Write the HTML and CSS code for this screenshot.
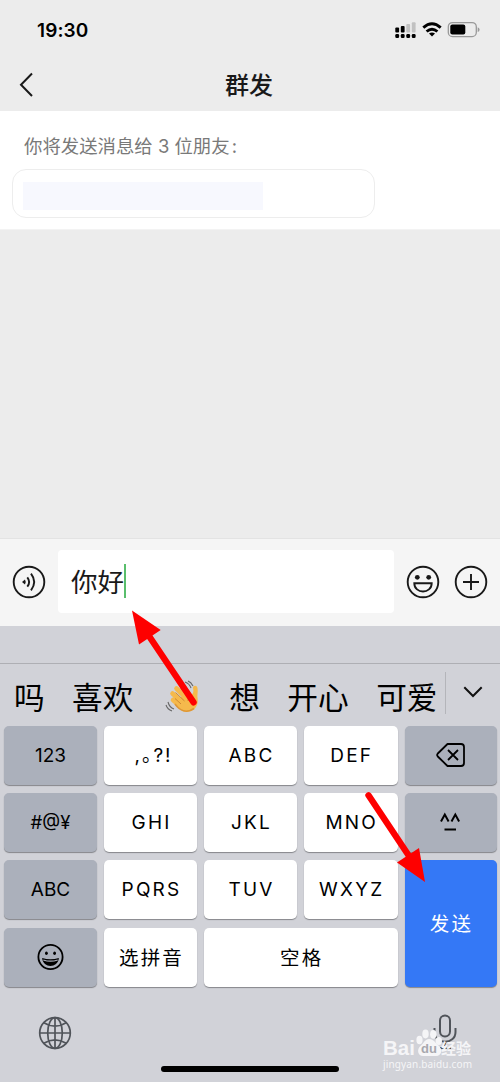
FILE: index.html
```html
<!DOCTYPE html>
<html lang="zh-CN">
<head>
<meta charset="utf-8">
<title>群发</title>
<link rel="stylesheet" href="styles.css">
</head>
<body>
<main class="phone">
  <header class="top">
    <div class="status">
      <span class="time">19:30</span>
      <svg class="indicators" width="88" height="18" viewBox="0 0 88 18">
        <g fill="#000">
          <rect x="1.3" y="7.5" width="3.8" height="5" rx="1"/><rect x="6.8" y="6" width="3.8" height="6.5" rx="1"/>
          <rect x="1.3" y="14" width="3.8" height="4" rx="1.2"/><rect x="6.8" y="14" width="3.8" height="4" rx="1.2"/><rect x="12.3" y="14" width="3.8" height="4" rx="1.2"/><rect x="17.8" y="14" width="3.8" height="4" rx="1.2"/>
        </g>
        <g fill="#c1c1c1"><rect x="12.3" y="4" width="3.8" height="8.5" rx="1"/><rect x="17.8" y="2.2" width="3.8" height="10.3" rx="1"/></g>
        <g fill="none" stroke="#000" stroke-width="2.9"><path d="M29.3 7.7q8.700-7.700 17.400 0"/><path d="M32.600 11.500q5.400-4.700 10.800 0"/></g>
        <path d="M35 13.600q3-2.200 6 0l-3 3z" fill="#000"/>
        <rect x="54.300" y="2.600" width="28" height="14" rx="4.200" fill="none" stroke="#999" stroke-width="1.300"/>
        <rect x="56.300" y="4.600" width="15" height="10" rx="2" fill="#000"/>
        <path d="M83.700 7.300q1.900.7 1.900 2.400t-1.900 2.400z" fill="#999"/>
      </svg>
    </div>
    <nav class="nav">
      <svg class="back" width="16" height="26" viewBox="0 0 16 26"><path d="M14 1.500 3 12.700 14 24" fill="none" stroke="#191919" stroke-width="2"/></svg>
      <h1 class="title">群发</h1>
    </nav>
  </header>

  <section class="recipients">
    <p class="hint">你将发送消息给 3 位朋友<span class="colon">:</span></p>
    <div class="names"><div class="mask"></div></div>
  </section>
  <section class="chat"></section>

  <section class="composer">
    <svg class="voice" width="34" height="34" viewBox="0 0 34 34" fill="none" stroke="#191919" stroke-width="1.9">
      <circle cx="17" cy="17" r="15.3"/>
      <path d="M10 17l3-2.500q1.500 2.500 0 5z" fill="#191919" stroke="none"/>
      <path d="M15.300 12.300q3.700 4.700 0 9.400M19 8.700q6.400 8.300 0 16.600"/>
    </svg>
    <div class="input"><span>你好</span><i class="caret"></i></div>
    <svg class="smile" width="34" height="34" viewBox="0 0 34 34" fill="none" stroke="#191919" stroke-width="1.9">
      <circle cx="17" cy="17" r="15.3"/>
      <circle cx="11.300" cy="12.300" r="2.400" fill="#191919" stroke="none"/><circle cx="22.700" cy="12.300" r="2.400" fill="#191919" stroke="none"/>
      <path d="M8.300 18.200h17.400c0 11-17.400 11-17.400 0z"/>
    </svg>
    <svg class="plus" width="34" height="34" viewBox="0 0 34 34" fill="none" stroke="#191919" stroke-width="1.9">
      <circle cx="17" cy="17" r="15.3"/><path d="M17 9v16M9 17h16"/>
    </svg>
  </section>

  <section class="keyboard">
    <div class="strip"></div>
    <div class="candidates">
      <span>吗</span><span>喜欢</span>
      <svg class="wave" width="41" height="38" viewBox="0 0 41 38">
        <g fill="none" stroke="#f5b94c" stroke-linecap="round" stroke-width="4.600">
          <path d="M12 21l8 7M11.500 14.500l11 10M15.500 9.500l11 11M22 7l8 11"/>
        </g>
        <path d="M13 22l7-4 9-2c3 0 4-3 3-7 0-3 4-3 4.500 0 .8 4-.7 7 .2 11 1 9-6 13-11 13-6 0-9-5-12.700-11z" fill="#f5b94c"/>
        <path d="M14 19.500l6 5.500M14.500 13.500l9 8.500M19.500 9.500l8 8.500M31 16c-3 1-4 3-4 6" fill="none" stroke="#cd8733" stroke-width="1"/>
        <path d="M14 25c5 7 12 9.500 19 4.500" fill="none" stroke="#dd9637" stroke-width="1.600"/>
        <path d="M24 3c3 1 5 3 6 6M27 2c3 1 4 3 5 5M7 23c1 4 3 6 6 7M5 26c1 3 3 5 6 6" fill="none" stroke="#676767" stroke-width="1.100"/>
      </svg>
      <span>想</span><span>开心</span><span>可爱</span>
      <div class="more"><svg width="22" height="14" viewBox="0 0 22 14"><path d="M2.300 2.300 11 11l8.700-8.700" fill="none" stroke="#111" stroke-width="2"/></svg></div>
    </div>
    <div class="keys">
      <div class="key dark">123</div><div class="key marks">,。?!</div><div class="key">ABC</div><div class="key">DEF</div>
      <div class="key dark"><svg width="30" height="26" viewBox="0 0 30 26" fill="none" stroke="#000" stroke-width="1.800"><path d="M11.500 2H25q3 0 3 3v16q0 3-3 3H11.500L1.800 14.500q-1.300-1.500 0-3z" stroke-linejoin="round"/><path d="M12 8l10 10m0-10l-10 10"/></svg></div>
      <div class="key dark symbols">#@¥</div><div class="key">GHI</div><div class="key">JKL</div><div class="key">MNO</div>
      <div class="key dark"><svg width="24" height="20" viewBox="0 0 24 20" fill="none" stroke="#000" stroke-width="2"><path d="M2 9.500 5.800 2.500l3.800 7M12.500 9.500l3.800-7 3.800 7M5.500 17.500h11.500"/></svg></div>
      <div class="key dark">ABC</div><div class="key">PQRS</div><div class="key">TUV</div><div class="key">WXYZ</div>
      <div class="key send">发送</div>
      <div class="key dark"><svg width="28" height="28" viewBox="0 0 28 28"><circle cx="13.500" cy="14" r="12.100" fill="none" stroke="#000" stroke-width="1.800"/><ellipse cx="9.400" cy="10.200" rx="1.400" ry="1.800"/><ellipse cx="17.600" cy="10.200" rx="1.400" ry="1.800"/><path d="M5.100 15q8.400 2.600 16.800 0c-1 10.500-15.800 10.500-16.800 0z"/><path d="M6.300 17q7.200 2.400 14.400 0" fill="none" stroke="#abb0bb" stroke-width="1.200"/></svg></div>
      <div class="key han">选拼音</div><div class="key han space">空格</div>
    </div>
    <footer class="bottom">
      <svg class="globe" width="34" height="34" viewBox="0 0 34 34" fill="none" stroke="#50545a" stroke-width="1.700"><circle cx="17" cy="17" r="15.3"/><ellipse cx="17" cy="17" rx="7.300" ry="15.300"/><path d="M17 1.700v30.600M1.700 17h30.600M5.800 6.700q11.200 7 22.400 0M5.800 27.300q11.200-7 22.400 0"/></svg>
      <svg class="mic" width="24" height="36" viewBox="0 0 24 36" fill="none" stroke="#50545a" stroke-width="2"><rect x="7" y="1.500" width="10" height="21" rx="5"/><path d="M1.500 14v4c0 13 21 13 21 0v-4M12 28v6M6 34h12"/></svg>
    </footer>
    <div class="home"></div>
  </section>

  <div class="watermark">
    <div class="brand"><span class="bai">Bai</span><span class="paw"><svg width="28" height="28" viewBox="0 0 28 28" fill="#f5f5f7"><ellipse cx="4.500" cy="11" rx="3.100" ry="4.200"/><ellipse cx="10.500" cy="5" rx="3.200" ry="4.400"/><ellipse cx="18.300" cy="5.300" rx="3.200" ry="4.400"/><ellipse cx="23.800" cy="12" rx="3.200" ry="4"/><path d="M14 10c-4 0-5 4-8 6.500-5 4-3 10.500 2 10.500h13c6 0 7-7 2.500-10.500C20 14 19 10 14 10z"/></svg><span class="du">du</span></span><span class="jy">经验</span></div>
    <div class="url">jingyan.baidu.com</div>
  </div>
  <svg class="arrows" width="500" height="1082" viewBox="0 0 500 1082">
    <g stroke="#fe0000" stroke-width="6.400" stroke-linecap="round"><path d="M149 636l44.500 66.300M368.500 795.300l42 63"/></g>
    <path d="M132 610.500l28.700 19.500L139 644.500zM425 882l-28-19.500 22-14.500z" fill="#fe0000"/>
  </svg>
</main>
</body>
</html>
```
FILE: styles.css
```css
* { box-sizing: border-box; }
body { margin: 0; font-family: Inter, "Noto Sans CJK SC", sans-serif; color: #191919; }
.phone { position: relative; width: 500px; height: 1082px; overflow: hidden; display: flex; flex-direction: column; background: #ececec; }
.top { height: 111px; }
.status { height: 58px; padding: 2px 18px 0 37px; display: flex; justify-content: space-between; align-items: center; }
.time { font-size: 19px; font-weight: 600; color: #000; letter-spacing: 0.1px; }
.indicators { margin: 0 0 2px; }
.nav { height: 53px; padding: 0 20px 0 18px; display: grid; grid-template-columns: 16px 1fr 14px; align-items: center; }
.title { margin: 0 2px 0 0; padding-top: 2px; text-align: center; font-size: 24px; line-height: 36px; font-weight: 500; }
.recipients { height: 119px; padding: 21px 12px 12px; background: #fff; border-bottom: 1px solid #f3f3f3; }
.hint { margin: 0 0 9px 12px; font-size: 18.4px; line-height: 28px; color: #797979; }
.colon { margin-left: 2px; }
.names { width: 363px; height: 49px; border: 1px solid #ededed; border-radius: 14px; padding: 12px 10px; }
.mask { width: 240px; height: 28px; background: #f7f8fe; }
.chat { flex: 1; }
.composer { height: 88px; padding: 0 12px 2px; display: flex; align-items: center; background: #f5f5f5; border-top: 1px solid #e3e3e3; }
.input { width: 336px; height: 63px; margin: 0 12px; padding-left: 13px; display: flex; align-items: center; background: #fff; border-radius: 4px; font-size: 26.5px; }
.input span { line-height: 40px; }
.caret { width: 2px; height: 34px; margin-top: -1px; background: #59be6c; }
.plus { margin-left: 14px; }
.keyboard { height: 456px; background: #d1d2d8; }
.strip { height: 38px; border-bottom: 1px solid #aeafb4; }
.candidates { height: 62px; padding: 5px 0 0 14px; display: flex; align-items: center; gap: 27.4px; font-size: 30.7px; line-height: 48px; color: #000; white-space: nowrap; }
.candidates > * { flex: none; }
.more { width: 55px; height: 42px; margin: -9px 0 0 -20px; padding: 0 0 2px 16px; display: flex; align-items: center; border-left: 1px solid #b4b5ba; }
.keys { padding: 0 3.5px 0 4px; display: grid; grid-template-columns: 93px 93px 93px 93.5px 92px; grid-template-rows: repeat(4, 59px); column-gap: 7px; row-gap: 8.2px; }
.key { display: flex; align-items: center; justify-content: center; background: #fff; border-radius: 5px; box-shadow: 0 1px 1px #85868b; color: #000; font-size: 19px; letter-spacing: 2.2px; padding: 0 0 1px 2px; white-space: nowrap; }
.dark { background: #abb0bb; padding-left: 0; letter-spacing: 0; }
.symbols { font-size: 18.5px; }
.marks { letter-spacing: 2px; padding: 0 0 4px 6px; font-feature-settings: "halt"; }
.han { padding-bottom: 2px; font-size: 19.5px; }
.send { grid-column: 5; grid-row: 3 / 5; background: #3478f6; color: #fff; padding-bottom: 2px; font-size: 19.5px; }
.space { grid-column: 3 / 5; }
.bottom { height: 55px; padding: 5px 43px 0 38px; margin-top: 24px; display: flex; justify-content: space-between; align-items: flex-start; }
.mic { margin-top: -2px; }
.home { width: 178px; height: 6px; margin: 0 0 0 161px; border-radius: 3px; background: #000; }
.watermark { position: absolute; left: 383px; top: 1028px; color: #f5f5f7; }
.brand { display: flex; align-items: flex-end; height: 29px; }
.bai { font: bold 20.5px/18px "Liberation Sans", sans-serif; width: 32px; }
.paw { position: relative; width: 26px; height: 28px; }
.du { position: absolute; left: 6px; top: 13px; color: #a7a8ae; font: bold 13px/14px "Liberation Sans", sans-serif; }
.jy { font: bold 15px/18px "Noto Sans CJK SC", sans-serif; }
.url { font: 10px/15px "Noto Sans", sans-serif; letter-spacing: .15px; }
.arrows { position: absolute; left: 0; top: 0; pointer-events: none; }
```
